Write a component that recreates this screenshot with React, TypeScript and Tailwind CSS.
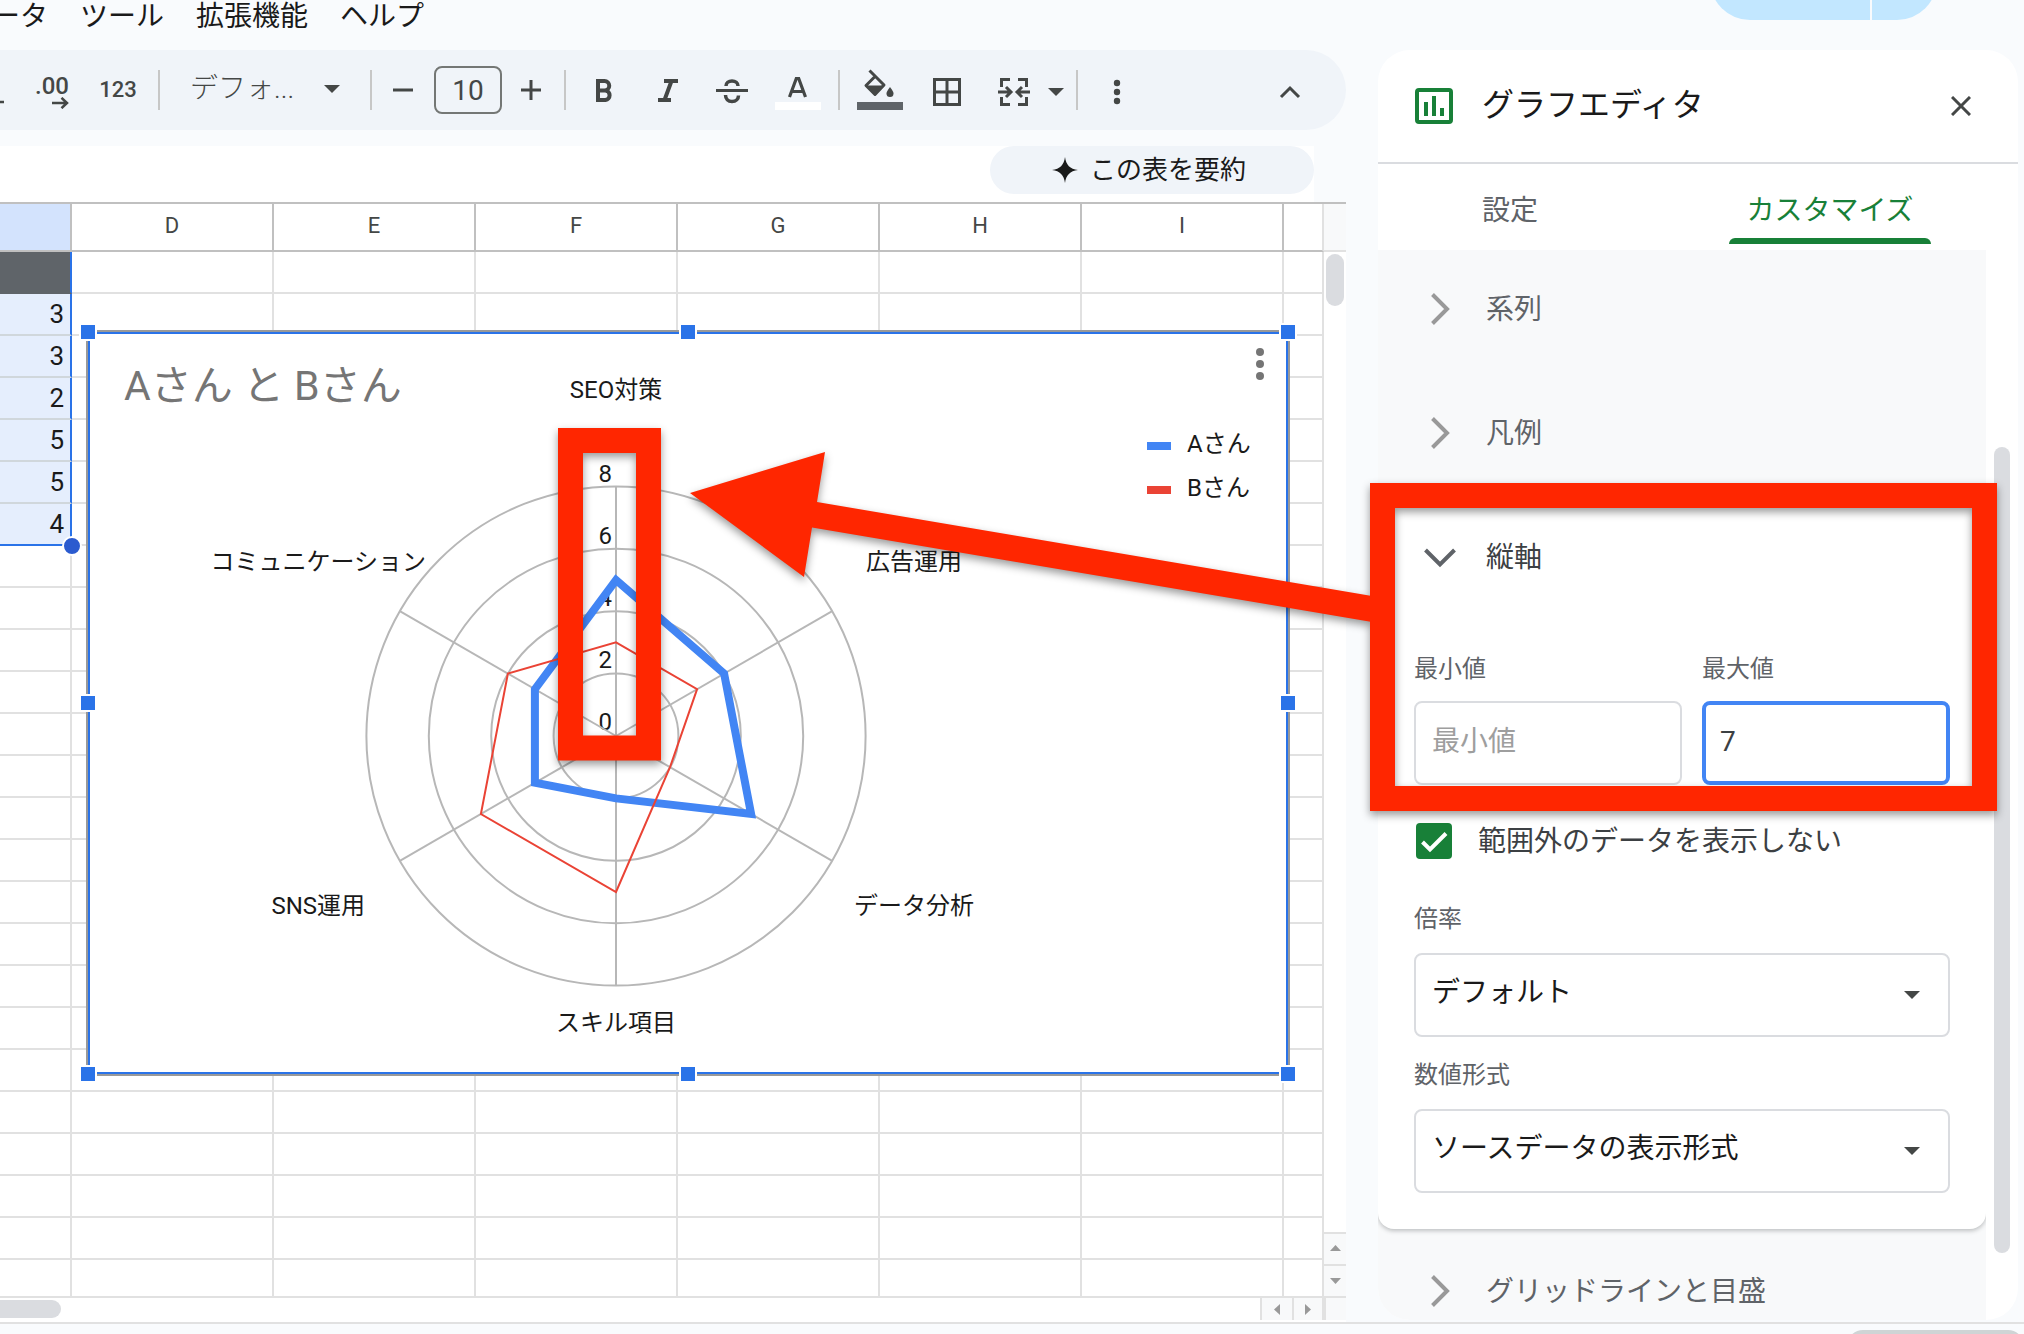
import React from "react";

const FONT = 'font-[Roboto,"Noto_Sans_CJK_JP",sans-serif]';

const COLUMNS = ["D", "E", "F", "G", "H", "I"];
const VALUES = ["", "3", "3", "2", "5", "5", "4"];
const ROW_COUNT = 25;

/* ---------- Radar chart ---------- */

const CX = 526;
const CY = 402;
const UNIT = 31.2;
const CATEGORIES = [
  { name: "SEO対策", x: 526, y: 64, anchor: "middle" },
  { name: "広告運用", x: 776, y: 236, anchor: "start" },
  { name: "データ分析", x: 764, y: 580, anchor: "start" },
  { name: "スキル項目", x: 526, y: 697, anchor: "middle" },
  { name: "SNS運用", x: 275, y: 580, anchor: "end" },
  { name: "コミュニケーション", x: 336, y: 236, anchor: "end" },
] as const;
const SERIES_A = [5, 4, 5, 2, 3, 3];
const SERIES_B = [3, 3, 2, 5, 5, 4];

function point(index: number, value: number) {
  const angle = (Math.PI / 3) * index;
  return [CX + Math.sin(angle) * value * UNIT, CY - Math.cos(angle) * value * UNIT];
}
function outline(values: number[]) {
  return values.map((v, i) => point(i, v).map((n) => n.toFixed(1)).join(",")).join(" ");
}

function RadarChart() {
  return (
    <svg width="1196" height="738" viewBox="0 0 1196 738" role="img" aria-label="Aさん と Bさん">
      <text x="34" y="66" fontSize="41" fill="#757575">
        Aさん と Bさん
      </text>
      <g fontSize="24" fill="#1a1a1a">
        {CATEGORIES.map((c) => (
          <text key={c.name} x={c.x} y={c.y} textAnchor={c.anchor}>
            {c.name}
          </text>
        ))}
        {[0, 2, 4, 6, 8].map((v) => (
          <text key={v} x="522" y={396 - v * 31} textAnchor="end">
            {v}
          </text>
        ))}
        <text x="1097" y="118">Aさん</text>
        <text x="1097" y="162">Bさん</text>
      </g>
      <rect x="1057" y="108" width="24" height="8" fill="#4285f4" />
      <rect x="1057" y="152" width="24" height="8" fill="#ea4335" />
      <g fill="none" stroke="#b7b7b7" strokeWidth="2">
        {[2, 4, 6, 8].map((v) => (
          <circle key={v} cx={CX} cy={CY} r={v * UNIT} />
        ))}
        {[0, 1, 2, 3, 4, 5].map((i) => {
          const [x, y] = point(i, 8);
          return <line key={i} x1={CX} y1={CY} x2={x} y2={y} />;
        })}
      </g>
      <polygon points={outline(SERIES_A)} fill="none" stroke="#4285f4" strokeWidth="8" />
      <polygon points={outline(SERIES_B)} fill="none" stroke="#ea4335" strokeWidth="2" />
      <g fill="#757575">
        <circle cx="1170" cy="18" r="4" />
        <circle cx="1170" cy="30" r="4" />
        <circle cx="1170" cy="42" r="4" />
      </g>
    </svg>
  );
}

const HANDLES = [
  "left-[-7px] top-[-7px]",
  "left-[593px] top-[-7px]",
  "right-[-7px] top-[-7px]",
  "left-[-7px] top-[364px]",
  "right-[-7px] top-[364px]",
  "left-[-7px] bottom-[-7px]",
  "left-[593px] bottom-[-7px]",
  "right-[-7px] bottom-[-7px]",
];

function ChartObject() {
  return (
    <div className="absolute left-[86px] top-[128px] border-2 border-[#999999] bg-white">
      <div className="border-2 border-[#2a73e8]">
        <RadarChart />
      </div>
      {HANDLES.map((h) => (
        <span key={h} className={"absolute box-content size-3.5 border-2 border-white bg-[#2a73e8] -m-0.5 " + h} />
      ))}
    </div>
  );
}

/* ---------- Toolbar ---------- */

function Divider({ className }: { className: string }) {
  return <span className={"h-10 w-0.5 shrink-0 bg-[#c7c7c7] " + className} />;
}

function Caret() {
  return (
    <svg width="16" height="8" viewBox="0 0 16 8" fill="#444746">
      <path d="M0 0h16l-8 8z" />
    </svg>
  );
}

function ToolButton({ label, className, children }: { label: string; className: string; children: React.ReactNode }) {
  return (
    <button type="button" aria-label={label} className={"flex h-12 shrink-0 items-center " + className}>
      {children}
    </button>
  );
}

function Toolbar() {
  return (
    <div className="flex h-20 items-center overflow-hidden rounded-r-[40px] bg-[#f0f4f9] text-[#444746]">
      <ToolButton label="小数点以下の桁数を減らす" className="w-[27px] justify-start">
        <svg width="27" height="48" viewBox="0 0 27 48">
          <path d="M0 36h4" stroke="#444746" strokeWidth="2.500" />
        </svg>
      </ToolButton>
      <ToolButton label="小数点以下の桁数を増やす" className="w-[42px] justify-end">
        <span className="flex flex-col items-end pt-1 text-2xl leading-[22px] font-medium">
          .00
          <svg width="17" height="12" viewBox="0 0 17 12" fill="none" stroke="#444746" strokeWidth="2.500">
            <path d="M0 6h15M9.500 .8 15 6l-5.500 5.200" />
          </svg>
        </span>
      </ToolButton>
      <ToolButton label="表示形式の詳細設定" className="ml-3 w-[74px] justify-center pb-0.5 text-[22px] font-medium">
        <span>123</span>
      </ToolButton>
      <Divider className="ml-[3px]" />
      <ToolButton label="フォント" className="ml-[30px] w-[150px] justify-between pb-0.5 text-[28px] font-light">
        <span>デフォ...</span>
        <Caret />
      </ToolButton>
      <Divider className="ml-[30px]" />
      <ToolButton label="フォントサイズを縮小" className="ml-4 w-[30px] justify-center">
        <svg width="22" height="22" viewBox="0 0 22 22">
          <path d="M1 11h20" stroke="#444746" strokeWidth="3" />
        </svg>
      </ToolButton>
      <input
        aria-label="フォントサイズ"
        defaultValue="10"
        className="ml-4 h-12 w-[68px] shrink-0 rounded-lg border-2 border-[#747775] bg-transparent text-center text-[28px]"
      />
      <ToolButton label="フォントサイズを拡大" className="ml-3.5 w-[30px] justify-center">
        <svg width="22" height="22" viewBox="0 0 22 22">
          <path d="M1 11h20M11 1v20" stroke="#444746" strokeWidth="3" />
        </svg>
      </ToolButton>
      <Divider className="ml-[18px]" />
      <ToolButton label="太字" className="ml-[18px] w-10">
        <svg width="40" height="48" viewBox="0 0 40 48" fill="none" stroke="#444746" strokeWidth="4">
          <path d="M14 15h6.500a4.500 4.500 0 0 1 0 9.500H14M14 24.500h7.500a4.800 4.800 0 0 1 0 9.500H14M14 13v23" />
        </svg>
      </ToolButton>
      <ToolButton label="斜体" className="ml-6 w-10">
        <svg width="40" height="48" viewBox="0 0 40 48" fill="none" stroke="#444746" strokeWidth="4">
          <path d="M16 15h14M10 34h13M23.500 15 16.500 34" />
        </svg>
      </ToolButton>
      <ToolButton label="取り消し線" className="ml-6 w-10">
        <svg width="40" height="48" viewBox="0 0 40 48" fill="none" stroke="#444746" strokeWidth="3.500">
          <path d="M4 24.500h32" strokeWidth="3" />
          <path d="M14 20c0-3 2.500-5 6-5s6 2 6 5" />
          <path d="M13.500 29c0 4 2.500 6.500 6.500 6.500s6.500-2.500 6.500-6" />
        </svg>
      </ToolButton>
      <ToolButton label="テキストの色" className="ml-[23px] w-[46px]">
        <svg width="46" height="48" viewBox="0 0 46 48">
          <path d="M14.500 31 21.300 12.500h2.400L30.500 31M17 25.500h11" fill="none" stroke="#444746" strokeWidth="3.200" />
          <rect y="36" width="46" height="8" fill="#ffffff" />
        </svg>
      </ToolButton>
      <Divider className="ml-[17px]" />
      <ToolButton label="塗りつぶしの色" className="ml-[17px] w-[46px]">
        <svg width="46" height="48" viewBox="0 0 46 48">
          <path d="M12.500 4.500 27 19 18 28.500 9 19.500 18 10.500" fill="none" stroke="#444746" strokeWidth="3" strokeLinejoin="round" />
          <path d="M8.500 19.500h19L18 29.500z" fill="#444746" />
          <path d="M33 21c2.500 3.500 3.500 5 3.500 6.500a3.500 3.500 0 0 1-7 0c0-1.500 1-3 3.500-6.500z" fill="#444746" />
          <rect y="36" width="46" height="8" fill="#5f6469" />
        </svg>
      </ToolButton>
      <ToolButton label="枠線" className="ml-6 w-10">
        <svg width="40" height="48" viewBox="0 0 40 48" fill="none" stroke="#444746" strokeWidth="3">
          <path d="M7.500 13.500h25v25h-25zM20 13.500v25M7.500 26h25" />
        </svg>
      </ToolButton>
      <ToolButton label="セルを結合" className="ml-[27px] w-10">
        <svg width="40" height="48" viewBox="0 0 40 48" fill="none" stroke="#444746" strokeWidth="3">
          <path d="M16 13.500H7.500V21M24 13.500h8.500V21M16 38.500H7.500V31M24 38.500h8.500V31" />
          <path d="M4 26h12M12 21l5 5-5 5M36 26H24M28 21l-5 5 5 5" />
        </svg>
      </ToolButton>
      <ToolButton label="結合の種類を選択" className="ml-3.5 w-4 pt-1">
        <Caret />
      </ToolButton>
      <Divider className="ml-3" />
      <ToolButton label="その他" className="ml-[19px] w-10">
        <svg width="40" height="48" viewBox="0 0 40 48" fill="#444746">
          <circle cx="20" cy="17" r="3.200" />
          <circle cx="20" cy="26" r="3.200" />
          <circle cx="20" cy="35" r="3.200" />
        </svg>
      </ToolButton>
      <ToolButton label="メニューを非表示" className="mr-9 ml-auto w-10">
        <svg width="40" height="48" viewBox="0 0 40 48" fill="none" stroke="#444746" strokeWidth="3">
          <path d="M11 31l9-9 9 9" />
        </svg>
      </ToolButton>
    </div>
  );
}

/* ---------- Sheet ---------- */

function Sheet() {
  return (
    <div className="flex min-h-0 flex-1 border-t-2 border-[#c0c0c0]">
      <div className="relative min-w-0 flex-1 overflow-hidden bg-white">
        <table className="w-full table-fixed border-separate border-spacing-0">
          <thead>
            <tr className="h-12 text-[22px] leading-8 text-[#444746]">
              <th aria-label="C" className="w-[72px] border-r-2 border-b-2 border-[#c0c0c0] bg-[#d3e3fd] p-0" />
              {COLUMNS.map((c) => (
                <th key={c} scope="col" className="w-[202px] border-r-2 border-b-2 border-[#c0c0c0] px-0 pt-0 pb-0.5 font-normal">
                  {c}
                </th>
              ))}
              <th aria-label="J" className="border-r-2 border-b-2 border-r-[#e1e1e1] border-b-[#c0c0c0] p-0" />
            </tr>
          </thead>
          <tbody>
            {Array.from({ length: ROW_COUNT }, (_, r) => (
              <tr key={r} className="h-[42px]">
                <td
                  className={
                    "border-r-2 border-b-2 py-0 pr-1.5 pl-0 text-right text-[26px] leading-[38px] text-[#1a1a1a] " +
                    (r === 0
                      ? "border-r-[#2a73e8] border-b-[#5f6469] bg-[#5f6469]"
                      : r === 6
                        ? "border-[#2a73e8] bg-[#e5eefd]"
                        : r < 6
                          ? "border-r-[#2a73e8] border-b-[#d0d7dc] bg-[#e5eefd]"
                          : "border-[#e1e1e1]")
                  }
                >
                  {VALUES[r] ?? ""}
                </td>
                {COLUMNS.map((c) => (
                  <td key={c} className="border-r-2 border-b-2 border-[#e1e1e1] p-0" />
                ))}
                <td className="border-r-2 border-b-2 border-[#e1e1e1] p-0" />
              </tr>
            ))}
          </tbody>
        </table>
        <span className="absolute left-[62px] top-[332px] size-5 rounded-full border-2 border-white bg-[#2b5bcf]" />
        <div className="absolute inset-0 mt-[-2px]">
          <ChartObject />
        </div>
      </div>
      <div className="flex w-[22px] flex-col bg-white">
        <div className="h-12 border-b-2 border-[#e1e1e1] bg-[#f8f9fa]" />
        <div className="mx-0.5 mt-0.5 h-[52px] rounded-full bg-[#dadce0]" />
        <div className="mt-auto flex h-8 items-center justify-center border-t-2 border-[#e1e1e1] bg-[#f8f9fa] pb-0.5">
          <svg width="11" height="6" viewBox="0 0 11 6" fill="#999"><path d="M0 6h11L5.500 0z" /></svg>
        </div>
        <div className="flex h-8 items-center justify-center border-t-2 border-[#e1e1e1] bg-[#f8f9fa]">
          <svg width="11" height="6" viewBox="0 0 11 6" fill="#999"><path d="M0 0h11L5.500 6z" /></svg>
        </div>
      </div>
    </div>
  );
}

function HorizontalScroll() {
  return (
    <div className="flex h-[26px] border-t-2 border-[#e1e1e1] bg-white">
      <div className="mt-0.5 h-[18px] w-[61px] rounded-r-full bg-[#dadce0]" />
      <div className="ml-auto flex h-[22px] w-8 items-center justify-center border-l-2 border-[#e1e1e1] bg-[#f8f9fa]">
        <svg width="6" height="11" viewBox="0 0 6 11" fill="#999"><path d="M6 0v11L0 5.500z" /></svg>
      </div>
      <div className="flex h-[22px] w-[30px] items-center justify-center border-l-2 border-[#e1e1e1] bg-[#f8f9fa]">
        <svg width="6" height="11" viewBox="0 0 6 11" fill="#999"><path d="M0 0v11l6-5.500z" /></svg>
      </div>
      <div className="h-[22px] w-6 border-l-4 border-[#e1e1e1] bg-[#f8f9fa]" />
    </div>
  );
}

/* ---------- Chart editor ---------- */

function SectionButton({ label, open = false, className = "h-[118px]" }: { label: string; open?: boolean; className?: string }) {
  return (
    <button
      type="button"
      aria-expanded={open}
      className={
        "flex w-full shrink-0 items-center gap-[30px] pl-[46px] text-left text-[28px] leading-8 " +
        (open ? "text-[#3c4043] " : "text-[#5f6368] ") +
        className
      }
    >
      <svg width="32" height="32" viewBox="0 0 32 32" fill="none" strokeWidth="4" stroke={open ? "#5f6368" : "#999999"}>
        <path d={open ? "M1.500 9 16 23.500 30.500 9" : "M8.500 1.500 23 16 8.500 30.500"} />
      </svg>
      <span className="pt-0.5">{label}</span>
    </button>
  );
}

function SelectField({ id, label, value }: { id: string; label: string; value: string }) {
  return (
    <div className="flex flex-col gap-[18px]">
      <label htmlFor={id} className="text-2xl leading-8 text-[#5f6368]">
        {label}
      </label>
      <div className="relative">
        <select
          id={id}
          defaultValue={value}
          className="h-[84px] w-full appearance-none rounded-lg border-2 border-[#dadce0] bg-white pr-16 pb-1 pl-4 text-[28px] text-[#1a1a1a]"
        >
          <option>{value}</option>
        </select>
        <span className="pointer-events-none absolute inset-y-0 right-[30px] flex items-center">
          <Caret />
        </span>
      </div>
    </div>
  );
}

function ChartEditor() {
  return (
    <aside className="flex w-[640px] flex-col rounded-[32px] bg-white">
      <header className="flex h-[114px] shrink-0 items-center border-b-2 border-[#dadce0] pr-[47px] pl-[37px]">
        <svg width="38" height="36" viewBox="0 0 38 36">
          <rect x="2" y="2" width="34" height="32" rx="2" fill="none" stroke="#188038" strokeWidth="4" />
          <path d="M11 28V14M19 28V8M27 28v-8" stroke="#188038" strokeWidth="4" />
        </svg>
        <h2 className="ml-[29px] pb-0.5 text-[32px] leading-10 text-[#1a1a1a]">グラフエディタ</h2>
        <button type="button" aria-label="閉じる" className="ml-auto">
          <svg width="20" height="20" viewBox="0 0 20 20" stroke="#444746" strokeWidth="3">
            <path d="M1 1l18 18M19 1 1 19" />
          </svg>
        </button>
      </header>
      <div role="tablist" className="flex h-[86px] shrink-0 pb-1.5 text-[28px]">
        <button type="button" role="tab" aria-selected="false" className="flex w-[264px] items-center justify-center pt-3.5 text-[#5f6368]">
          設定
        </button>
        <div className="flex flex-1 justify-center">
          <button type="button" role="tab" aria-selected="true" className="relative flex w-[202px] items-center justify-center pt-3.5 text-[#188038]">
            カスタマイズ
            <span className="absolute inset-x-0 bottom-0 h-1.5 rounded-t-md bg-[#188038]" />
          </button>
        </div>
      </div>
      <div className="flex min-h-0 flex-1">
        <div className="flex min-w-0 flex-1 flex-col gap-1.5 overflow-hidden rounded-bl-[32px] bg-[#f8f9fa]">
          <SectionButton label="系列" />
          <SectionButton label="凡例" />
          <section className="shrink-0 rounded-2xl bg-white pb-9 shadow-[0_2px_4px_rgba(60,64,67,0.3)]">
            <SectionButton label="縦軸" open />
            <div className="flex flex-col px-9">
              <div className="mt-[37px] flex gap-5">
                <div className="flex w-[268px] flex-col gap-4">
                  <label htmlFor="axis-min" className="text-2xl leading-8 text-[#5f6368]">
                    最小値
                  </label>
                  <input
                    id="axis-min"
                    placeholder="最小値"
                    className="h-[84px] w-full rounded-lg border-2 border-[#dadce0] px-4 pb-1 text-[28px] placeholder:text-[#9e9e9e]"
                  />
                </div>
                <div className="flex min-w-0 flex-1 flex-col gap-4">
                  <label htmlFor="axis-max" className="text-2xl leading-8 text-[#5f6368]">
                    最大値
                  </label>
                  <input
                    id="axis-max"
                    defaultValue="7"
                    className="h-[84px] w-full rounded-lg border-4 border-[#4285f4] px-3.5 pb-1 text-[28px] text-[#3c4043]"
                  />
                </div>
              </div>
              <label className="mt-[38px] flex h-9 items-center gap-[26px] pl-0.5 text-[28px] leading-9 text-[#3c4043]">
                <span className="relative size-9 shrink-0">
                  <input type="checkbox" defaultChecked className="block size-9 appearance-none rounded bg-[#188038]" />
                  <svg className="pointer-events-none absolute inset-0" width="36" height="36" viewBox="0 0 36 36" fill="none" stroke="#fff" strokeWidth="4">
                    <path d="M6.500 19l7.500 7.500L30 10.500" />
                  </svg>
                </span>
                <span className="pt-0.5">範囲外のデータを表示しない</span>
              </label>
              <div className="mt-11 flex flex-col gap-[22px]">
                <SelectField id="scale" label="倍率" value="デフォルト" />
                <SelectField id="number-format" label="数値形式" value="ソースデータの表示形式" />
              </div>
            </div>
          </section>
          <SectionButton label="グリッドラインと目盛" className="h-28" />
        </div>
        <div className="w-8 shrink-0 pl-2">
          <div className="mt-[197px] h-[806px] w-4 rounded-full bg-[#dadce0]" />
        </div>
      </div>
    </aside>
  );
}

/* Red frames around the axis labels and the min/max fields, joined by an arrow */
function Callout() {
  return (
    <svg
      aria-hidden="true"
      className="pointer-events-none absolute top-0 right-0 drop-shadow-[0_4px_4px_rgba(0,0,0,0.4)]"
      width="2024"
      height="1334"
      viewBox="0 0 2024 1334"
    >
      <g fill="none" stroke="#ff2600">
        <path d="M570.500 440.500h78v307.500h-78z" strokeWidth="25" />
        <path d="M1382.500 495.500h602v303h-602z" strokeWidth="25" />
      </g>
      <path d="M690 493 825 452 817 502 1372 596v26L812 527.500 804 577z" fill="#ff2600" />
    </svg>
  );
}

export default function App() {
  return (
    <div className={"relative flex h-screen w-full flex-col overflow-hidden bg-[#f9fbfd] " + FONT}>
      <div className="flex h-[50px] shrink-0 items-start justify-between">
        <nav className="-ml-9 flex h-[34px] items-center gap-8 text-[28px] leading-[34px] text-[#1a1a1a]">
          <button type="button">データ</button>
          <button type="button">ツール</button>
          <button type="button">拡張機能</button>
          <button type="button">ヘルプ</button>
        </nav>
        <div className="mr-[87px] flex h-5 gap-0.5 overflow-hidden">
          <button type="button" aria-label="共有" className="mt-[-60px] h-20 w-[160px] rounded-bl-[40px] bg-[#c2e7ff]" />
          <button type="button" aria-label="共有オプション" className="mt-[-60px] h-20 w-[65px] rounded-br-[40px] bg-[#c2e7ff]" />
        </div>
      </div>
      <main className="flex min-h-0 flex-1">
        <div className="flex min-w-0 flex-1 flex-col">
          <Toolbar />
          <div className="mt-4 mr-8 flex h-14 justify-end bg-white">
            <button
              type="button"
              className="flex h-12 w-[324px] items-center justify-center gap-3 rounded-full bg-[#f0f4f9] pr-1.5 text-[26px] leading-8 text-[#1a1a1a]"
            >
              <svg width="26" height="26" viewBox="0 0 26 26" fill="#1a1a1a">
                <path d="M13 0c1 8 5 12 13 13-8 1-12 5-13 13-1-8-5-12-13-13 8-1 12-5 13-13z" />
              </svg>
              <span>この表を要約</span>
            </button>
          </div>
          <Sheet />
          <HorizontalScroll />
        </div>
        <div className="flex shrink-0 pr-1.5 pb-0.5 pl-8">
          <ChartEditor />
        </div>
      </main>
      <footer className="flex h-3 shrink-0 justify-end overflow-hidden border-t-2 border-[#e1e1e1] pt-1.5">
        <div className="h-8 w-[177px] rounded-tl-2xl rounded-tr-2xl bg-[#cfd4d5]" />
      </footer>
      <Callout />
    </div>
  );
}
